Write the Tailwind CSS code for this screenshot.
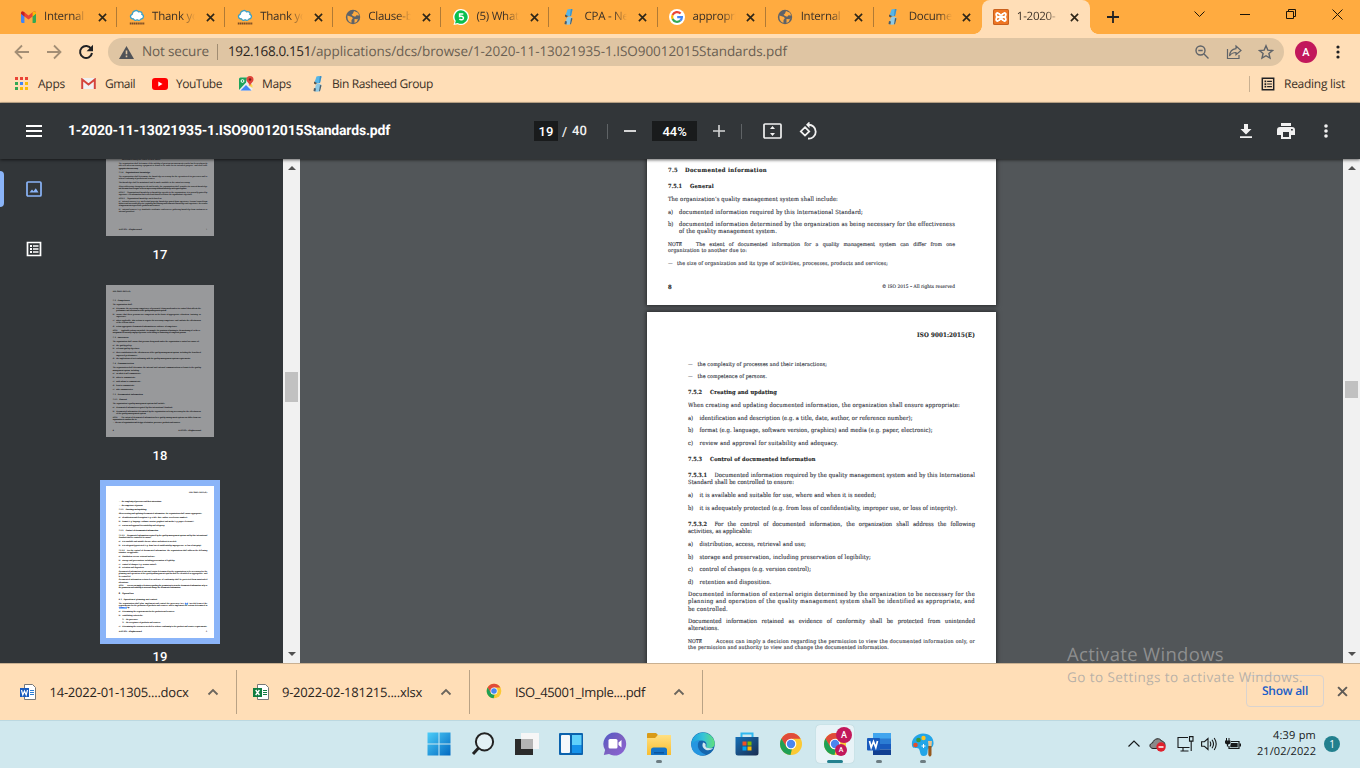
<!DOCTYPE html>
<html lang="en">
<head>
<meta charset="utf-8">
<title>1-2020-11-13021935-1.ISO90012015Standards.pdf</title>
<script src="https://cdn.jsdelivr.net/npm/@tailwindcss/browser@4"></script>
</head>
<body class="w-[1360px] h-[768px] overflow-hidden relative flex flex-col font-['Open_Sans','Noto_Sans',sans-serif] text-[12px] text-[#3b3026] leading-none">

<svg class="absolute w-0 h-0">
  <defs>
    <symbol id="gmail" viewBox="0 0 14 11"><path fill="#4285f4" d="M0 1.5V10q0 1 1 1h2.2V4.5L0 2z"/><path fill="#34a853" d="M10.8 11H13q1 0 1-1V2l-3.2 2.5z"/><path fill="#ea4335" d="M0 2Q0 .2 1.6.2L3.2 1 7 4l3.800-3Q14-1.200 14 2l-3.200 3L7 7.800 3.200 5z"/><path fill="#c5221f" d="M0 2Q0-.8 3.200 1v4L0 2.500z"/><path fill="#fbbc04" d="M14 2q0-2.800-3.200-1v4L14 2.500z"/></symbol>
    <symbol id="cloudy" viewBox="0 0 16 16"><path fill="#fff" stroke="#3d9fc4" stroke-width="1.300" d="M4.500 10C1 10 .500 6 3.200 5.300 3.500 1.500 8 .5 9.600 2.800c2.600-.8 4 1 3.300 2.500 2.500.8 1.800 4.700-.8 4.700-1 1.600-3 1.600-4 .8-1.300 1-3 .6-3.600-.8z"/><path stroke="#7a4a22" stroke-width="2" stroke-dasharray="1.500 .4" d="M.8 14.500h14.500"/></symbol>
    <symbol id="globe" viewBox="0 0 16 16"><circle cx="8" cy="8" r="7.200" fill="#5f6368"/><path fill="#ffab40" d="M2.500 6.500L7 8l.8 1.500L6.500 11v2.800C4 13.200 2 11 2.500 6.500zM9 2l4 1.800 1.200 2.700-2.700-.3-1.300 1.500L8 7 6.500 5.800 8 4.500zM9.500 10l3 .2 1-1.200-1.700 3.800L9.500 14z"/></symbol>
    <symbol id="whats" viewBox="0 0 16 16"><path fill="#fff" d="M8 0a8 8 0 1 1-3.500 15.200L.5 16l1-3.500A8 8 0 0 1 8 0z"/><path fill="#0abf4e" d="M8 1.300a6.700 6.700 0 1 1-3.200 12.600L2 14.500l.8-2.600A6.700 6.700 0 0 1 8 1.300z"/><path fill="none" stroke="#fff" stroke-width="1.500" d="M10.300 5H6.600v2.600c3.200-.8 4.400.6 3.600 2.300-.7 1.200-2.700 1.200-3.900.3"/></symbol>
    <symbol id="bin" viewBox="0 0 10 16"><path fill="#57b5e6" d="M3.500.5Q6-.5 8.500 1L7 7Q4 8 1.500 6.500z"/><path fill="#3d8fc4" d="M6.800 0h1.700L7 7H6z"/><path fill="#5a5248" d="M1 5.500l3 1.500-1.500 1.500L1 7.500z"/><path fill="#8fc9e4" d="M3 8.500Q6 7 8.500 9L7 15Q4 16.500 1 15z"/><path fill="#4a5c68" d="M7 9l1.500.5L7 15l-1 .5zM1 12l2 .5-.6 3L.5 15z"/></symbol>
    <symbol id="google" viewBox="0 0 16 16"><circle cx="8" cy="8" r="8" fill="#fff"/><g fill="none" stroke-width="2.200"><path stroke="#ea4335" d="M11.600 4.600A4.900 4.900 0 0 0 3.600 6"/><path stroke="#fbbc05" d="M3.600 6a4.900 4.900 0 0 0 0 4.100"/><path stroke="#34a853" d="M3.600 10.100a4.900 4.900 0 0 0 7.600 1.600"/><path stroke="#4285f4" d="M11.200 11.700A4.900 4.900 0 0 0 12.900 8.200H8.200"/></g></symbol>
    <symbol id="xampp" viewBox="0 0 16 16"><rect width="16" height="16" rx="1.500" fill="#c9601d"/><rect x="1" y="1" width="14" height="14" rx="1" fill="#ee7623"/><g fill="none" stroke="#fff" stroke-width="1.800"><path d="M5.500 4H4.800C2.600 4 2.600 7.600 4.800 8h6.400c2.200-.4 2.200-4 0-4h-.7M5.500 12h-.7C2.600 12 2.600 8.400 4.800 8M11.200 8c2.200.4 2.200 4 0 4h-.7M6.300 4v1.500Q6.300 6 8 6t1.700-.5V4M6.300 12v-1.500Q6.300 10 8 10t1.700.5V12"/></g></symbol>
    <symbol id="chrome" viewBox="0 0 24 24"><circle cx="12" cy="12" r="11" fill="#fbc934"/><path fill="#e04b3a" d="M12 1a11 11 0 0 1 9.600 5.700H12L7 15 2.400 6.700A11 11 0 0 1 12 1z"/><path fill="#1fa055" d="M2.400 6.600L7.400 15q2 2.700 5.500 2.200L11.500 23A11 11 0 0 1 2.400 6.600z"/><circle cx="12" cy="12" r="5.300" fill="#fff"/><circle cx="12" cy="12" r="4.200" fill="#4a86f0"/></symbol>
    <symbol id="word" viewBox="0 0 24 22"><path fill="#41a5ee" d="M6 0h18v6H6z"/><path fill="#2b7cd3" d="M6 5.500h18V11H6z"/><path fill="#185abd" d="M6 11h18v5.500H6z"/><path fill="#103f91" d="M6 16.500h18V22H6z"/><rect y="5" width="13" height="12.500" rx="1" fill="#185abd"/><path fill="none" stroke="#fff" stroke-width="1.700" d="M2.500 8l1.700 6.500L6.500 8.500l2.300 6L10.500 8"/></symbol>
    <symbol id="list" viewBox="0 0 16 16"><path fill="none" stroke="currentColor" stroke-width="1.700" d="M1.500 1.500h13v13h-13z"/><path fill="currentColor" d="M4 4h2v2H4zM4 7h2v2H4zM4 10h2v2H4zM7 4.300h5.500v1.400H7zM7 7.300h5.500v1.400H7zM7 10.300h5.500v1.400H7z"/></symbol>
    <symbol id="cross" viewBox="0 0 10 10"><path stroke="currentColor" stroke-width="1.800" d="M1 1l8 8M9 1L1 9"/></symbol>
    <symbol id="chev" viewBox="0 0 12 8"><path fill="none" stroke="currentColor" stroke-width="1.800" d="M1.500 6.500L6 2l4.500 4.500"/></symbol>
    <linearGradient id="wing" gradientUnits="userSpaceOnUse" x1="0" y1="0" x2="24" y2="24"><stop stop-color="#4fd0fa"/><stop offset="1" stop-color="#0067c0"/></linearGradient>
    <linearGradient id="chatg" x1="0" x2="1" y2="1"><stop stop-color="#5059c9"/><stop offset=".5" stop-color="#7b60c0"/><stop offset="1" stop-color="#8b62d8"/></linearGradient>
    <linearGradient id="edgeg" x1="0" x2="1"><stop stop-color="#1c9fe0"/><stop offset=".5" stop-color="#36c3d8"/><stop offset="1" stop-color="#5fe07a"/></linearGradient>
    <linearGradient id="storeg" x1="0" x2="1" y2="1"><stop stop-color="#1470b8"/><stop offset="1" stop-color="#1b2d4f"/></linearGradient>
    <linearGradient id="dirg" x1="0" y1="0" x2="0" y2="1"><stop stop-color="#ffe083"/><stop offset="1" stop-color="#f9bd2e"/></linearGradient>
  </defs>
</svg>

<!-- Tab strip -->
<header class="h-[34px] shrink-0 bg-[#ffab40] flex items-stretch pl-[9px]">
  <div id="tabs" class="flex w-[1082px]"></div>
  <div class="flex items-center pl-[16px]">
    <svg class="w-3 h-3" viewBox="0 0 12 12"><path stroke="#202124" stroke-width="1.800" d="M6 0v12M0 6h12"/></svg>
  </div>
  <div class="flex ml-auto h-7 items-center text-[#1c1408]">
    <span class="w-[46px] flex justify-center"><svg class="w-[11px] h-[7px]" viewBox="0 0 11 7"><path fill="none" stroke="currentColor" d="M.5.5l5 5 5-5"/></svg></span>
    <span class="w-[46px] flex justify-center"><i class="w-[10px] h-px bg-[#1c1408]"></i></span>
    <span class="w-[46px] flex justify-center"><svg class="w-[10px] h-[10px]" viewBox="0 0 10 10"><path fill="none" stroke="currentColor" d="M.5 2.500h7v7h-7zM2.500 2V.5h7v7H8"/></svg></span>
    <span class="w-[46px] flex justify-center"><svg class="w-[11px] h-[11px]" viewBox="0 0 11 11"><path stroke="currentColor" d="M.5.5l10 10M10.500.5l-10 10"/></svg></span>
  </div>
</header>

<!-- Address bar -->
<div class="h-[34px] shrink-0 bg-[#ffdeb7] flex items-center pt-[2px] pl-[14px]">
  <svg class="w-4 h-4 text-[#a38e75]" viewBox="0 0 16 16"><path fill="none" stroke="currentColor" stroke-width="1.800" d="M15 8H2M8 1.500L1.500 8 8 14.500"/></svg>
  <svg class="w-4 h-4 ml-4 text-[#a38e75]" viewBox="0 0 16 16"><path fill="none" stroke="currentColor" stroke-width="1.800" d="M1 8h13M8 1.500L14.500 8 8 14.500"/></svg>
  <svg class="w-4 h-4 ml-4" viewBox="0 0 16 16"><path fill="none" stroke="#202124" stroke-width="2" d="M13.200 4.800A6 6 0 1 0 14 9"/><path fill="#202124" d="M15 .8v6.400H8.600z"/></svg>
  <div class="ml-[14px] w-[1176px] h-7 rounded-full bg-[#dfc5a3] flex items-center pl-[11px] text-[13.500px] text-[#6a5f52]">
    <svg class="w-[15px] h-[13px]" viewBox="0 0 15 13"><path fill="#4f5257" d="M7.500 0L15 13H0z"/><path stroke="#dfc5a3" stroke-width="1.600" d="M7.500 4.500v3.700M7.500 9.500v1.700"/></svg>
    <span class="fit ml-[8px]" data-w="67">Not secure</span>
    <i class="w-px h-4 ml-[8px] bg-[#a08c72]"></i>
    <span class="fit ml-[10px] text-[#2a241d]" data-w="83">192.168.0.151</span>
    <span class="fit" data-w="476">/applications/dcs/browse/1-2020-11-13021935-1.ISO90012015Standards.pdf</span>
    <svg class="w-4 h-4 ml-auto" viewBox="0 0 16 16"><g fill="none" stroke="#5f6368" stroke-width="1.400"><circle cx="6.500" cy="6.500" r="4.500"/><path d="M10 10l4.500 4.500M4.300 6.500h4.400"/></g></svg>
    <svg class="w-4 h-4 ml-4" viewBox="0 0 16 16"><path fill="none" stroke="#5f6368" stroke-width="1.200" d="M1.500 5v9.500H13V11M10 2l5 4.500-5 4.300V8.500C7 8.500 5 9.500 3.500 12 3.800 7.500 6 5 10 4.600z"/></svg>
    <svg class="w-4 h-4 ml-4 mr-[10px]" viewBox="0 0 16 16"><path fill="none" stroke="#5f6368" stroke-width="1.400" d="M8 1.800l1.800 4.300 4.700.4-3.600 3 1.100 4.600L8 11.700l-4 2.400 1.100-4.600-3.600-3 4.700-.4z"/></svg>
  </div>
  <span class="ml-[11px] w-[22px] h-[22px] rounded-full bg-[#c2185b] text-white text-[11px] font-['Roboto',sans-serif] font-medium flex items-center justify-center">A</span>
  <svg class="w-1 h-4 ml-[19px]" viewBox="0 0 4 16"><g fill="#202124"><circle cx="2" cy="3" r="1.600"/><circle cx="2" cy="8" r="1.600"/><circle cx="2" cy="13" r="1.600"/></g></svg>
</div>

<!-- Bookmarks -->
<div class="h-[35px] shrink-0 bg-[#ffdeb7] border-b border-[#c9b091] flex items-center pl-[15px] pb-[3px]">
  <svg class="w-[13px] h-[13px]" viewBox="0 0 13 13"><path fill="#ea4335" d="M0 0h3v3H0zM5 0h3v3H5zM10 0h3v3h-3z"/><path fill="#34a853" d="M0 5h3v3H0zM0 10h3v3H0z"/><path fill="#4285f4" d="M5 5h3v3H5z"/><path fill="#fbbc05" d="M10 5h3v3h-3zM5 10h3v3H5zM10 10h3v3h-3z"/></svg>
  <span class="fit ml-[10px]" data-w="27">Apps</span>
  <svg class="w-[15px] h-[11px] ml-[16px]" viewBox="0 0 15 11"><rect width="15" height="11" rx="1" fill="#f1f1f1"/><path fill="none" stroke="#d5443a" stroke-width="2" d="M1.200 11V1.500l6.300 5 6.300-5V11"/></svg>
  <span class="fit ml-[9px]" data-w="30">Gmail</span>
  <svg class="w-[16px] h-[12px] ml-[17px]" viewBox="0 0 16 12"><rect width="16" height="12" rx="3" fill="#f00"/><path fill="#fff" d="M6.300 3.500v5L10.500 6z"/></svg>
  <span class="fit ml-[8px]" data-w="46">YouTube</span>
  <svg class="w-[15px] h-[15px] ml-[17px]" viewBox="0 0 15 15"><rect y="1.500" width="13.500" height="13" rx="1.500" fill="#eceff1"/><path fill="#1fa35b" d="M0 3q0-1.500 1.500-1.500H8L7 6.500 0 14z"/><path fill="#4285f4" d="M1.500 14.500L7 9l5.500 5.500z"/><path fill="#ffd54f" d="M9 9l3-1.500 1.500 1.500v3z"/><path fill="#e0443a" d="M11 0a3.500 3.500 0 0 1 3.500 3.500C14.500 6 11.500 7 11 10.500 10.500 7 7.500 6 7.500 3.500A3.500 3.500 0 0 1 11 0z"/><circle cx="11" cy="3.500" r="1.200" fill="#7b1f1a"/><circle cx="3.500" cy="5" r="1.400" fill="none" stroke="#fff"/></svg>
  <span class="fit ml-[8px]" data-w="29">Maps</span>
  <svg class="w-[10px] h-4 ml-[22px]"><use href="#bin"/></svg>
  <span class="fit ml-[9px]" data-w="101">Bin Rasheed Group</span>
  <i class="ml-auto w-px h-4 bg-[#c9b091]"></i>
  <svg class="w-[14px] h-[14px] ml-[11px] text-[#202124]"><use href="#list"/></svg>
  <span class="fit ml-[9px] mr-[15px]" data-w="61">Reading list</span>
</div>

<!-- PDF toolbar -->
<div class="relative z-10 h-[56px] shrink-0 bg-[#323639] flex items-center pl-[26px] text-[#f1f1f1] text-[14px] font-['Roboto',sans-serif] font-medium shadow-[0_1px_3px_rgba(0,0,0,0.6)]">
  <svg class="w-4 h-3" viewBox="0 0 16 12"><path fill="#fff" d="M0 0h16v2H0zM0 5h16v2H0zM0 10h16v2H0z"/></svg>
  <span class="fit ml-[26px] text-white font-bold" data-w="322">1-2020-11-13021935-1.ISO90012015Standards.pdf</span>
  <span class="ml-[144px] w-6 h-5 bg-[#191b1c] flex items-center justify-center text-[13px] text-white">19</span>
  <span class="ml-[4px] text-[13px]">/</span>
  <span class="fit ml-[5px] text-[13px]" data-w="15">40</span>
  <i class="w-px h-[15px] ml-[20px] bg-[#5f6366]"></i>
  <i class="w-3 h-[1.500px] ml-[16px] bg-[#d5d6d6]"></i>
  <span class="ml-[16px] w-[45px] h-5 bg-[#191b1c] flex items-center justify-center text-[13px] text-white">44%</span>
  <svg class="w-3 h-3 ml-[16px]" viewBox="0 0 12 12"><path stroke="#d5d6d6" stroke-width="1.600" d="M6 0v12M0 6h12"/></svg>
  <i class="w-px h-[15px] ml-[16px] bg-[#5f6366]"></i>
  <svg class="w-[19px] h-4 ml-[20.500px]" viewBox="0 0 19 16"><rect x="1" y="1" width="17" height="14" rx="1" fill="none" stroke="#f1f1f1" stroke-width="1.700"/><path fill="#f1f1f1" d="M9.500 3L12 6H7zM9.500 13L12 10H7z"/></svg>
  <svg class="w-[19px] h-[18px] ml-[17px]" viewBox="0 0 19 18"><g fill="none" stroke="#f1f1f1" stroke-width="1.800"><path d="M6 5.200l4.200 4.200L6 13.600 1.800 9.400zM9 2.800a6.900 6.900 0 1 1 0 13.700"/></g><path fill="#f1f1f1" d="M10.500-.7v7L7 2.800z"/></svg>
  <svg class="w-3 h-[14px] ml-auto" viewBox="0 0 12 14"><path fill="#f1f1f1" d="M4 0h4v5h3.500L6 10.500.5 5H4zM0 12.200h12V14H0z"/></svg>
  <svg class="w-[18px] h-4 ml-[25px]" viewBox="0 0 18 16"><path fill="#f1f1f1" d="M4 0h10v3H4zM3 4h12q3 0 3 3v5h-4v4H4v-4H0V7q0-3 3-3z"/><path fill="#323639" d="M6 9h6v5H6zM14 6h1.800v1.600H14z"/></svg>
  <svg class="w-1 h-4 ml-[29px] mr-[32px]" viewBox="0 0 4 16"><g fill="#f1f1f1"><circle cx="2" cy="3" r="1.800"/><circle cx="2" cy="8" r="1.800"/><circle cx="2" cy="13" r="1.800"/></g></svg>
</div>

<!-- Viewer -->
<main class="h-[504px] shrink-0 flex bg-[#525659] overflow-hidden">
  <aside class="w-[283px] bg-[#323639] flex overflow-hidden">
    <nav class="w-[68px] flex flex-col">
      <div class="mt-[12px] h-9 flex items-center">
        <i class="w-1 h-9 rounded-r bg-[#8ab4f8]"></i>
        <svg class="w-4 h-4 ml-[22px]" viewBox="0 0 16 16"><rect x="1" y="1" width="14" height="14" rx="1" fill="none" stroke="#8ab4f8" stroke-width="1.700"/><path fill="#8ab4f8" d="M3.500 11.500L6 8.500l1.500 1.800 2.300-3L12.500 11.500z"/></svg>
      </div>
      <svg class="w-4 h-4 mt-[34px] ml-[26px] text-white"><use href="#list"/></svg>
    </nav>
    <div class="w-[184px] flex flex-col items-center text-white text-[13px] font-['Roboto',sans-serif] font-medium">
      <div id="t17" class="w-[108px] h-[77px] bg-[#98999b] text-[#2a2b2d] overflow-hidden font-['DejaVu_Serif_Condensed','DejaVu_Serif',serif] font-normal [-webkit-text-stroke:0.08px]"></div>
      <span class="h-[49px] pt-[12px]">17</span>
      <div id="t18" class="w-[108px] h-[152px] bg-[#98999b] text-[#222325] overflow-hidden shrink-0 font-['DejaVu_Serif_Condensed','DejaVu_Serif',serif] font-normal [-webkit-text-stroke:0.08px]"></div>
      <span class="h-[43px] pt-[12px]">18</span>
      <div class="p-[6px] bg-[#8ab4f8] shrink-0"><div id="t19" class="w-[108px] h-[152px] bg-white text-[#222] overflow-hidden font-['DejaVu_Serif_Condensed','DejaVu_Serif',serif] font-normal [-webkit-text-stroke:0.08px]"></div></div>
      <span class="pt-[6px]">19</span>
    </div>
  </aside>
  <div class="w-[17px] bg-[#f1f1f1] flex flex-col items-center">
    <svg class="w-2 h-1 mt-[7px]" viewBox="0 0 8 4"><path fill="#505050" d="M0 4l4-4 4 4z"/></svg>
    <i class="w-[13px] h-[30px] mt-[202px] bg-[#c1c1c1]"></i>
    <svg class="w-2 h-1 mt-auto mb-[7px]" viewBox="0 0 8 4"><path fill="#505050" d="M0 0l4 4 4-4z"/></svg>
  </div>
  <section class="flex-1 flex flex-col items-start pl-[347px] overflow-hidden font-['DejaVu_Serif_Condensed','DejaVu_Serif',serif] text-[#2d303a] [-webkit-text-stroke:0.12px]">
    <div id="p18" class="w-[349px] h-[146px] shrink-0 bg-white overflow-hidden shadow-[0_0_4px_1px_rgba(0,0,0,0.5)]"></div>
    <div id="p19" class="w-[349px] h-[360px] mt-[7px] shrink-0 bg-white overflow-hidden shadow-[0_0_4px_1px_rgba(0,0,0,0.5)]"></div>
  </section>
  <div class="w-[17px] bg-[#f1f1f1] flex flex-col items-center">
    <svg class="w-2 h-1 mt-[7px]" viewBox="0 0 8 4"><path fill="#505050" d="M0 4l4-4 4 4z"/></svg>
    <i class="w-[13px] h-[17px] mt-[211px] bg-[#c1c1c1]"></i>
    <svg class="w-2 h-1 mt-auto mb-[7px]" viewBox="0 0 8 4"><path fill="#505050" d="M0 0l4 4 4-4z"/></svg>
  </div>
</main>

<!-- Downloads -->
<div class="h-[57px] shrink-0 bg-[#ffdeb7] border-t border-[#c9b091] flex items-center text-[13px] text-[#2a241d]">
  <div class="w-[236px] flex items-center pl-5">
    <svg class="w-4 h-4" viewBox="0 0 16 16"><path fill="#fff" stroke="#777" d="M4.500.5h8l3 3v12h-11z"/><path stroke="#2b7cd3" d="M10 6.500h4M10 8.500h4M10 10.500h4"/><rect y="4" width="9" height="9" fill="#185abd"/><path fill="none" stroke="#fff" stroke-width="1.200" d="M1.500 6l1.300 5 1.700-4 1.700 4 1.300-5"/></svg>
    <span class="fit ml-[13.500px]" data-w="139">14-2022-01-1305....docx</span>
    <svg class="w-3 h-2 ml-[18px] text-[#6b655d]"><use href="#chev"/></svg>
  </div>
  <i class="w-px h-[44px] bg-[#b9a285]"></i>
  <div class="w-[232px] flex items-center pl-4">
    <svg class="w-4 h-4" viewBox="0 0 16 16"><path fill="#fff" stroke="#777" d="M4.500.5h8l3 3v12h-11z"/><path stroke="#107c41" d="M10 6.500h4M10 8.500h4M10 10.500h4"/><rect y="4" width="9" height="9" fill="#107c41"/><path stroke="#fff" stroke-width="1.400" d="M2.700 6l3.700 5M6.400 6l-3.700 5"/></svg>
    <span class="fit ml-[13px]" data-w="140">9-2022-02-181215....xlsx</span>
    <svg class="w-3 h-2 ml-[18px] text-[#6b655d]"><use href="#chev"/></svg>
  </div>
  <i class="w-px h-[44px] bg-[#b9a285]"></i>
  <div class="w-[232px] flex items-center pl-4">
    <svg class="w-4 h-4 mb-[2px]"><use href="#chrome"/></svg>
    <span class="fit ml-[13px]" data-w="130">ISO_45001_Imple....pdf</span>
    <svg class="w-3 h-2 ml-[28px] text-[#6b655d]"><use href="#chev"/></svg>
  </div>
  <i class="w-px h-[44px] bg-[#b9a285]"></i>
  <div class="ml-auto w-[78px] h-8 mb-[2px] rounded border border-[#d9d3cf] flex items-center justify-center text-[#1a5dc8] font-semibold text-[12px]"><span class="fit" data-w="46">Show all</span></div>
  <svg class="w-[11px] h-[11px] mb-[2px] ml-[13px] mr-[12px] text-[#5f5b57]"><use href="#cross"/></svg>
</div>

<!-- Taskbar -->
<footer class="h-12 shrink-0 bg-[#d0e8ee] border-t border-[#bcd8e0] flex items-stretch pl-[417px] pb-px">
  <div class="flex">
    <span class="w-11 flex items-center justify-center"><svg class="w-6 h-6" viewBox="0 0 24 24"><path fill="url(#wing)" d="M.5.5h11v11H.5zM12.500.5h11v11h-11zM.5 12.500h11v11H.5zM12.500 12.500h11v11h-11z"/></svg></span>
    <span class="w-11 flex items-center justify-center"><svg class="w-6 h-6" viewBox="0 0 24 24"><circle cx="13.500" cy="9.800" r="8.600" fill="#e3f1f5" stroke="#222" stroke-width="2"/><path stroke="#222" stroke-width="3" d="M7.500 16L2 22"/></svg></span>
    <span class="w-11 flex items-center justify-center"><svg class="w-6 h-6" viewBox="0 0 24 24"><rect x="6" y="1" width="18" height="16" fill="#f6f6f6"/><rect y="7" width="18" height="16" fill="#2b2b2b"/><rect x="6" y="7" width="12" height="10" fill="#b4b4b4"/></svg></span>
    <span class="w-11 flex items-center justify-center"><svg class="w-6 h-[22px]" viewBox="0 0 24 22"><rect width="24" height="22" rx="1" fill="#0b62ad"/><rect x="2" y="2" width="9" height="18" rx="1" fill="#f5f8fb"/><rect x="13" y="2" width="9.500" height="10" fill="#5fd0fb"/><rect x="13" y="12" width="9.500" height="8" fill="#1592ea"/></svg></span>
    <span class="w-11 flex items-center justify-center"><svg class="w-6 h-6" viewBox="0 0 24 24"><path fill="url(#chatg)" d="M12 .5A11.500 11.500 0 1 1 6 22L.8 23l1.300-5A11.500 11.500 0 0 1 12 .5z"/><rect x="5.500" y="7" width="9" height="9.500" rx="1.500" fill="#fff"/><path fill="#fff" d="M15.500 10.500L18.500 8v7.500l-3-2.500z"/></svg></span>
    <span class="w-11 flex flex-col items-center justify-center pt-[8px]"><svg class="w-6 h-[22px]" viewBox="0 0 24 22"><path fill="#d99b18" d="M0 1q0-1 1-1h8l2 2-2 3H0z"/><path fill="url(#dirg)" d="M0 5h8l3-3h13v20H0z"/><path fill="#1374c8" d="M4 22v-5q0-2.500 2.500-2.500h11q2.500 0 2.500 2.500v5z"/><path fill="#0b559e" d="M7 19h10v1.500H7z"/></svg><i class="w-[6px] h-[3px] mt-[5px] rounded bg-[#6d7d82]"></i></span>
    <span class="w-11 flex items-center justify-center"><svg class="w-6 h-6" viewBox="0 0 24 24"><circle cx="12" cy="12" r="11.800" fill="#1566ad"/><path fill="url(#edgeg)" d="M.5 10A11.800 11.800 0 0 1 23.800 11q0 5-5 5.300-5 0-3.300-3Q16 9 11 8.500 4 8.500.5 14z"/><path fill="#2596e0" d="M.3 13Q3 8 9 8.300 5 12 8 17.500q2.500 4 7 4.800Q12 24 9 23.500.5 21 .3 13z"/><path fill="#d0e8ee" d="M12 10.500q3.500.5 2.500 3.500.5 3 8 2-3 3-7.500 2-5-2.500-3-7.500z"/></svg></span>
    <span class="w-11 flex items-center justify-center"><svg class="w-6 h-6" viewBox="0 0 24 24"><path fill="none" stroke="#2fb8f0" stroke-width="2" d="M6.500 6V1.500h11V6"/><path fill="url(#storeg)" d="M.5 5h23v16q0 2.500-2.500 2.500H3Q.5 23.500.5 21z"/><path fill="#f25022" d="M7.500 9.500h4v4h-4z"/><path fill="#7fba00" d="M12.500 9.500h4v4h-4z"/><path fill="#00a4ef" d="M7.500 14.500h4v4h-4z"/><path fill="#ffb900" d="M12.500 14.500h4v4h-4z"/></svg></span>
    <span class="w-11 flex items-center justify-center"><svg class="w-6 h-6"><use href="#chrome"/></svg></span>
    <span class="w-11 flex items-center justify-center"><span class="relative w-[38px] h-[38px] rounded bg-[#e8f3f7] shadow-[0_0_1px_#9bb] flex items-center justify-center"><svg class="w-6 h-6"><use href="#chrome"/></svg>
      <b class="absolute left-[20px] top-[2px] w-4 h-4 rounded-full bg-[#c2185b] text-white text-[9px] font-['Roboto',sans-serif] font-medium flex items-center justify-center">A</b>
      <b class="absolute left-[19px] top-[19px] w-3 h-3 rounded-full bg-[#c2185b] text-white text-[7px] font-['Roboto',sans-serif] font-medium flex items-center justify-center">A</b>
      <i class="absolute left-[11px] bottom-0 w-4 h-[3px] rounded bg-[#22808e]"></i></span></span>
    <span class="w-11 flex flex-col items-center justify-center pt-[8px]"><svg class="w-6 h-[22px]"><use href="#word"/></svg><i class="w-[6px] h-[3px] mt-[5px] rounded bg-[#6d7d82]"></i></span>
    <span class="w-11 flex flex-col items-center justify-center pt-[8px]"><svg class="w-6 h-[24px]" viewBox="0 0 24 24"><path fill="#22a5e8" d="M12 .5C19 .5 23 5 22.500 11c-.5 4-3.500 4-5 4.500-2 1 1 7.500-5 7.500-4 0-3-5-4.500-7-1-1.500-5 0-6.500-2C-1 8 4 .5 12 .5z"/><circle cx="4.500" cy="12" r="2.300" fill="#e2502c"/><circle cx="7.500" cy="7" r="2.300" fill="#3f9a3a"/><circle cx="12.500" cy="5" r="2.200" fill="#ffc420"/><path fill="#e9c08a" d="M17 8h4l-.5 5h-3z"/><path fill="#96591e" d="M17.300 13h3.200v9q-1.600 3-3.200 0z"/><path stroke="#fff" d="M12.500 11v4M10.500 13h4"/></svg><i class="w-[6px] h-[3px] mt-[3px] rounded bg-[#6d7d82]"></i></span>
  </div>
  <div class="ml-auto flex items-center text-[#16191a]">
    <svg class="w-3 h-2" viewBox="0 0 12 8"><path fill="none" stroke="currentColor" stroke-width="1.200" d="M.5 6.500L6 1l5.500 5.500"/></svg>
    <svg class="w-[17px] h-[15px] ml-[9px]" viewBox="0 0 17 15"><path fill="#8a8a8a" stroke="#222" d="M4 11.500C0 11 0 6.500 3.500 6 5 1 11 .5 12.500 4c3.500.5 4 4 3 6l-3 1.500z"/><circle cx="12" cy="10" r="4.700" fill="#e0202c"/><path stroke="#fff" stroke-width="1.500" d="M9.500 10h5"/></svg>
    <svg class="w-[17px] h-[16px] ml-[11px]" viewBox="0 0 17 16"><path fill="none" stroke="currentColor" stroke-width="1.100" d="M11 1.500H1v10h11.500M3.500 15h8M6 11.500V15M12.500.600h3.500v4.500h-3.500zM14.200 5v10"/></svg>
    <svg class="w-4 h-[14px] ml-[7px]" viewBox="0 0 16 14"><path fill="none" stroke="currentColor" stroke-width="1.100" d="M.6 4.700h2.800L7 1.500v11L3.400 9.300H.6zM9 4.500q1.500 2.500 0 5M11 2.700q3 4.300 0 8.600M13.200 1q4 6 0 12"/></svg>
    <svg class="w-4 h-[13px] ml-[8px]" viewBox="0 0 16 13"><path fill="none" stroke="currentColor" stroke-width="1.200" d="M6 3.500h8v7H4V8M2.500 5.500v3"/><path fill="currentColor" d="M6 5H12.700v4.300H5.300V7.500zM14.500 5.500H16v3h-1.500zM0 2.500h5.500v2.700q-2.700 2.500-5.500 0zM1 0h1v3H1zM3.500 0h1v3h-1z"/></svg>
    <div class="w-[75px] h-[35px] flex flex-col items-end gap-[5px] text-[11px]">
      <span class="fit mt-[3px]" data-w="43">4:39 pm</span>
      <span class="fit" data-w="59">21/02/2022</span>
    </div>
    <span class="ml-[8px] mr-[20px] w-4 h-4 rounded-full bg-[#22808e] text-white text-[10px] flex items-center justify-center">1</span>
  </div>
</footer>

<!-- Activation notice -->
<div class="absolute left-[1067px] top-[643px] flex flex-col text-[#a2a2a2]/75">
  <span class="fit text-[18.500px] leading-[23px]" data-w="157">Activate Windows</span>
  <span class="fit text-[13.500px] leading-[22px]" data-w="236">Go to Settings to activate Windows.</span>
</div>

<script>
const tabs = [
  ['gmail', 'Internal A', 15, 12], ['cloudy', 'Thank yo', 16, 16], ['cloudy', 'Thank yo', 16, 16],
  ['globe', 'Clause-b', 16, 16], ['whats', '(5) What', 16, 16], ['bin', 'CPA - Ne', 10, 16],
  ['google', 'appropri', 16, 16], ['globe', 'Internal', 16, 16], ['bin', 'Docume', 10, 16], ['xampp', '1-2020-', 16, 16]];
document.getElementById('tabs').innerHTML = tabs.map(([icon, label, w, h], i) => {
  const active = i === 9;
  const shape = active ? "relative bg-[#ffdeb7] rounded-t-lg before:content-[''] before:absolute before:-left-2 before:bottom-0 before:size-2 before:bg-[radial-gradient(circle_at_0_0,transparent_7.5px,#ffdeb7_8px)] after:content-[''] after:absolute after:-right-2 after:bottom-0 after:size-2 after:bg-[radial-gradient(circle_at_100%_0,transparent_7.5px,#ffdeb7_8px)]" : '';
  return `<div class="w-[108.100px] h-[34px] flex items-center ${shape}">
    <span class="w-[16px] ml-[11.500px] flex justify-center shrink-0"><svg style="width:${w}px;height:${h}px"><use href="#${icon}"/></svg></span>
    <span class="w-[43px] ml-[7.500px] overflow-hidden whitespace-nowrap leading-[20px] text-[11.500px] tracking-[-0.250px] [text-rendering:geometricPrecision] [mask-image:linear-gradient(to_right,black_68%,transparent)]">${label}</span>
    <svg class="w-[9px] h-[9px] ml-[10.500px] text-[#2e2618] shrink-0"><use href="#cross"/></svg>
    ${i < 8 ? '<i class="w-px h-5 ml-auto bg-[#b07a35]"></i>' : ''}
  </div>`;
}).join('');

/* Row: [centre y, [x, width, text, bold, justify, size], ...] */
function page(id, rows, size, k, ox, oy) {
  let bottom = 0;
  document.getElementById(id).innerHTML = rows.map(([y, ...cells]) => {
    const lh = size * 1.2, top = (y - oy) / k - lh / 2 + .9 / k, mt = top - bottom;
    bottom = top + lh;
    let end = 0;
    return `<div class="flex whitespace-nowrap" style="height:${lh}px;line-height:${lh}px;margin-top:${mt}px">` + cells.map(([x, w, t, b, j, s]) => {
      const left = (x - ox) / k, ml = left - end;
      end = left + w / k;
      return `<span class="fit shrink-0 ${b ? 'font-bold text-[#1d1f26]' : ''}" data-w="${w / k}" data-j="${j || ''}" style="margin-left:${ml}px;font-size:${(s || size) * (b ? .84 : .87)}px">${t}</span>`;
    }).join('') + '</div>';
  }).join('');
}
const B = 1, J = 1;
page('p18', [
  [170, [668, 10, '7.5', B, 0, 7], [685, 82, 'Documented information', B, 0, 7]],
  [186, [668, 14, '7.5.1', B], [690, 24, 'General', B]],
  [199, [668, 170, 'The organization’s quality management system shall include:']],
  [212, [668, 5, 'a)'], [679, 184, 'documented information required by this International Standard;']],
  [224, [668, 5, 'b)'], [679, 276, 'documented information determined by the organization as being necessary for the effectiveness']],
  [231, [679, 98, 'of the quality management system.']],
  [244, [668, 14, 'NOTE', 0, 0, 5.8], [696, 259, 'The extent of documented information for a quality management system can differ from one', 0, J, 6.1]],
  [250.5, [668, 79, 'organization to another due to:', 0, 0, 6]],
  [263.3, [668, 5.5, '—', 0, 0, 6], [677, 211, 'the size of organization and its type of activities, processes, products and services;', 0, 0, 6]],
  [287, [668, 4, '8', B, 0, 7], [882, 73, '© ISO 2015 – All rights reserved', 0, 0, 5.5]]
], 6.7, 1, 647, 159);
page('p19', [
  [335, [917, 58, 'ISO 9001:2015(E)', B, 0, 7.4]],
  [364.200, [688, 5.500, '—', 0, 0, 6], [697.500, 129.500, 'the complexity of processes and their interactions;', 0, 0, 6.200]],
  [376.500, [688, 5.500, '—', 0, 0, 6], [697.500, 69.500, 'the competence of persons.', 0, 0, 6.200]],
  [392, [688, 14, '7.5.2', B], [710, 67, 'Creating and updating', B]],
  [405, [688, 272, 'When creating and updating documented information, the organization shall ensure appropriate:']],
  [418, [688, 5, 'a)'], [699.500, 213, 'identification and description (e.g. a title, date, author, or reference number);']],
  [430.300, [688, 5, 'b)'], [699.500, 233, 'format (e.g. language, software version, graphics) and media (e.g. paper, electronic);']],
  [443, [688, 5, 'c)'], [699.500, 138.500, 'review and approval for suitability and adequacy.']],
  [459, [688, 14, '7.5.3', B], [710, 105.500, 'Control of documented information', B]],
  [475, [688, 19, '7.5.3.1', B], [714.500, 260.500, 'Documented information required by the quality management system and by this International']],
  [482, [688, 106, 'Standard shall be controlled to ensure:']],
  [495, [688, 5, 'a)'], [699.500, 176.500, 'it is available and suitable for use, where and when it is needed;']],
  [508, [688, 5, 'b)'], [699.500, 258, 'it is adequately protected (e.g. from loss of confidentiality, improper use, or loss of integrity).']],
  [524, [688, 19, '7.5.3.2', B], [714.500, 260.500, 'For the control of documented information, the organization shall address the following', 0, J]],
  [531, [688, 64, 'activities, as applicable:']],
  [544, [688, 5, 'a)'], [699.500, 106.500, 'distribution, access, retrieval and use;']],
  [557, [688, 5, 'b)'], [699.500, 171.500, 'storage and preservation, including preservation of legibility;']],
  [569, [688, 5, 'c)'], [699.500, 111.500, 'control of changes (e.g. version control);']],
  [582, [688, 5, 'd)'], [699.500, 72, 'retention and disposition.']],
  [594, [688, 287, 'Documented information of external origin determined by the organization to be necessary for the']],
  [601.300, [688, 287, 'planning and operation of the quality management system shall be identified as appropriate, and']],
  [609, [688, 40, 'be controlled.']],
  [621, [688, 287, 'Documented information retained as evidence of conformity shall be protected from unintended', 0, J]],
  [628, [688, 31, 'alterations.']],
  [641, [688, 14, 'NOTE', 0, 0, 5.800], [716, 259, 'Access can imply a decision regarding the permission to view the documented information only, or', 0, 0, 6]],
  [647, [688, 201, 'the permission and authority to view and change the documented information.', 0, 0, 6]]
], 6.7, 1, 647, 312);
/* Thumbnails use thirds of a pixel */
page('t17', [
  [15, [366, 116, 'undertaken during the course of their duties.']],
  [28, [356, 266, 'The organization shall determine if the validity of previous measurement results has been adversely']],
  [34, [356, 266, 'affected when measuring equipment is found to be unfit for its intended purpose, and shall take']],
  [41, [356, 57, 'appropriate action as necessary.']],
  [55, [356, 14, '7.1.6', B], [377, 73, 'Organizational knowledge', B]],
  [67, [356, 266, 'The organization shall determine the knowledge necessary for the operation of its processes and to']],
  [73, [356, 109, 'achieve conformity of products and services.']],
  [85, [356, 214, 'This knowledge shall be maintained and be made available to the extent necessary.']],
  [97, [356, 266, 'When addressing changing needs and trends, the organization shall consider its current knowledge']],
  [103, [356, 204, 'and determine how to acquire or access any necessary additional knowledge and required updates.']],
  [115, [356, 18, 'NOTE 1'], [382, 240, 'Organizational knowledge is knowledge specific to the organization; it is generally gained by']],
  [121, [356, 221, 'experience. It is information that is used and shared to achieve the organization’s objectives.']],
  [133, [356, 18, 'NOTE 2'], [382, 103, 'Organizational knowledge can be based on:']],
  [142, [356, 6, 'a)'], [367, 255, 'internal sources (e.g. intellectual property; knowledge gained from experience; lessons learned from']],
  [148, [356, 266, 'failures and successful projects; capturing and sharing undocumented knowledge and experience; the results']],
  [154, [356, 124, 'of improvements in processes, products and services);']],
  [166, [356, 6, 'b)'], [367, 255, 'external sources (e.g. standards; academia; conferences; gathering knowledge from customers or']],
  [172, [356, 49, 'external providers).']],
  [225, [356, 69, '© ISO 2015 – All rights reserved'], [618, 4, '7']]
], 2.1, 3, 318, 12);
page('t18', [
  [411, [338, 54, 'ISO 9001:2015(E)', B]],
  [439, [338, 10, '7.2', B], [353, 37, 'Competence', B]],
  [451, [338, 59, 'The organization shall:']],
  [463, [338, 6, 'a)'], [349, 254, 'determine the necessary competence of person(s) doing work under its control that affects the']],
  [469, [349, 150, 'performance and effectiveness of the quality management system;']],
  [481, [338, 6, 'b)'], [349, 254, 'ensure that these persons are competent on the basis of appropriate education, training, or']],
  [487, [349, 30, 'experience;']],
  [499, [338, 6, 'c)'], [349, 254, 'where applicable, take actions to acquire the necessary competence, and evaluate the effectiveness']],
  [505, [349, 55, 'of the actions taken;']],
  [517, [338, 6, 'd)'], [349, 184, 'retain appropriate documented information as evidence of competence.']],
  [529, [338, 14, 'NOTE'], [364, 238, 'Applicable actions can include, for example, the provision of training to, the mentoring of, or the re-']],
  [535, [338, 221, 'assignment of currently employed persons; or the hiring or contracting of competent persons.']],
  [550, [338, 10, '7.3', B], [353, 33, 'Awareness', B]],
  [562, [338, 260, 'The organization shall ensure that persons doing work under the organization’s control are aware of:']],
  [574, [338, 6, 'a)'], [349, 47, 'the quality policy;']],
  [583, [338, 6, 'b)'], [349, 70, 'relevant quality objectives;']],
  [595, [338, 6, 'c)'], [349, 254, 'their contribution to the effectiveness of the quality management system, including the benefits of']],
  [604, [349, 64, 'improved performance;']],
  [613, [338, 6, 'd)'], [349, 223, 'the implications of not conforming with the quality management system requirements.']],
  [628, [338, 10, '7.4', B], [353, 49, 'Communication', B]],
  [640, [338, 265, 'The organization shall determine the internal and external communications relevant to the quality']],
  [649, [338, 80, 'management system, including:']],
  [658, [338, 6, 'a)'], [349, 74, 'on what it will communicate;']],
  [670, [338, 6, 'b)'], [349, 58, 'when to communicate;']],
  [682, [338, 6, 'c)'], [349, 74, 'with whom to communicate;']],
  [694, [338, 6, 'd)'], [349, 55, 'how to communicate;']],
  [706, [338, 6, 'e)'], [349, 51, 'who communicates.']],
  [721, [338, 10, '7.5', B], [353, 76, 'Documented information', B]],
  [736, [338, 14, '7.5.1', B], [358, 23, 'General', B]],
  [748, [338, 157, 'The organization’s quality management system shall include:']],
  [760, [338, 6, 'a)'], [349, 169, 'documented information required by this International Standard;']],
  [772, [338, 6, 'b)'], [349, 254, 'documented information determined by the organization as being necessary for the effectiveness']],
  [778, [349, 90, 'of the quality management system.']],
  [790, [338, 14, 'NOTE'], [364, 239, 'The extent of documented information for a quality management system can differ from one']],
  [796, [338, 73, 'organization to another due to:']],
  [805, [338, 5, '—'], [346, 195, 'the size of organization and its type of activities, processes, products and services;']],
  [829, [338, 4, '8', B], [535, 68, '© ISO 2015 – All rights reserved']]
], 2.1, 3, 318, 390);
page('t19', [
  [189, [567, 55, 'ISO 9001:2015(E)', B]],
  [217, [356, 5, '—'], [365, 120, 'the complexity of processes and their interactions;']],
  [229, [356, 5, '—'], [365, 64, 'the competence of persons.']],
  [241, [356, 14, '7.5.2', B], [377, 62, 'Creating and updating', B]],
  [253, [356, 250, 'When creating and updating documented information, the organization shall ensure appropriate:']],
  [265, [356, 6, 'a)'], [367, 196, 'identification and description (e.g. a title, date, author, or reference number);']],
  [277, [356, 6, 'b)'], [367, 215, 'format (e.g. language, software version, graphics) and media (e.g. paper, electronic);']],
  [289, [356, 6, 'c)'], [367, 127, 'review and approval for suitability and adequacy.']],
  [304, [356, 14, '7.5.3', B], [377, 98, 'Control of documented information', B]],
  [319, [356, 18, '7.5.3.1', B], [381, 241, 'Documented information required by the quality management system and by this International']],
  [325, [356, 98, 'Standard shall be controlled to ensure:']],
  [337, [356, 6, 'a)'], [367, 163, 'it is available and suitable for use, where and when it is needed;']],
  [349, [356, 6, 'b)'], [367, 238, 'it is adequately protected (e.g. from loss of confidentiality, improper use, or loss of integrity).']],
  [364, [356, 18, '7.5.3.2', B], [381, 241, 'For the control of documented information, the organization shall address the following']],
  [370, [356, 60, 'activities, as applicable:']],
  [382, [356, 6, 'a)'], [367, 98, 'distribution, access, retrieval and use;']],
  [394, [356, 6, 'b)'], [367, 158, 'storage and preservation, including preservation of legibility;']],
  [406, [356, 6, 'c)'], [367, 103, 'control of changes (e.g. version control);']],
  [415, [356, 6, 'd)'], [367, 66, 'retention and disposition.']],
  [427, [356, 266, 'Documented information of external origin determined by the organization to be necessary for the']],
  [433, [356, 266, 'planning and operation of the quality management system shall be identified as appropriate, and']],
  [442, [356, 37, 'be controlled.']],
  [451, [356, 266, 'Documented information retained as evidence of conformity shall be protected from unintended']],
  [460, [356, 30, 'alterations.']],
  [469, [356, 14, 'NOTE'], [382, 240, 'Access can imply a decision regarding the permission to view the documented information only, or']],
  [475, [356, 186, 'the permission and authority to view and change the documented information.']],
  [492, [356, 4, '8', B, 0, 2.4], [367, 34, 'Operation', B, 0, 2.4]],
  [511, [356, 10, '8.1', B], [371, 101, 'Operational planning and control', B]],
  [523, [356, 196, 'The organization shall plan, implement and control the processes (see'], [554, 10, '<a class="text-blue-700 bg-blue-300">4.4</a>'], [566, 56, ') needed to meet the']],
  [529, [356, 266, 'requirements for the provision of products and services, and to implement the actions determined in']],
  [535, [356, 24, '<a class="text-blue-700 bg-blue-300">Clause 6</a>'], [381, 7, ', by:']],
  [547, [356, 6, 'a)'], [367, 157, 'determining the requirements for the products and services;']],
  [559, [356, 6, 'b)'], [367, 62, 'establishing criteria for:']],
  [571, [367, 5, '1)'], [378, 36, 'the processes;']],
  [580, [367, 5, '2)'], [378, 104, 'the acceptance of products and services;']],
  [592, [356, 6, 'c)'], [367, 254, 'determining the resources needed to achieve conformity to the product and service requirements;']],
  [607, [356, 69, '© ISO 2015 – All rights reserved'], [618, 4, '9']]
], 2.1, 3, 318, 168);

/* Give every measured label its set width by spreading letters, or words when justified */
function fitLabels() {
  document.querySelectorAll('.fit').forEach(el => {
    const w = parseFloat(el.dataset.w), text = el.textContent;
    const prop = el.dataset.j ? 'wordSpacing' : 'letterSpacing';
    const n = el.dataset.j ? text.split(' ').length - 1 : text.length;
    Object.assign(el.style, { display: 'block', whiteSpace: 'nowrap', flexShrink: 0, width: 'max-content', textRendering: 'geometricPrecision' });
    const range = document.createRange();
    range.selectNodeContents(el);
    let gap = 0;
    el.style[prop] = '0px';
    for (let pass = 0; pass < 4; pass++) {
      gap += (w - range.getBoundingClientRect().width) / n;
      el.style[prop] = gap + 'px';
    }
    el.style.width = w + 'px';
  });
}
fitLabels();
addEventListener('load', () => { fitLabels(); requestAnimationFrame(fitLabels); setTimeout(fitLabels, 60); });
document.fonts.ready.then(fitLabels);
</script>
</body>
</html>
